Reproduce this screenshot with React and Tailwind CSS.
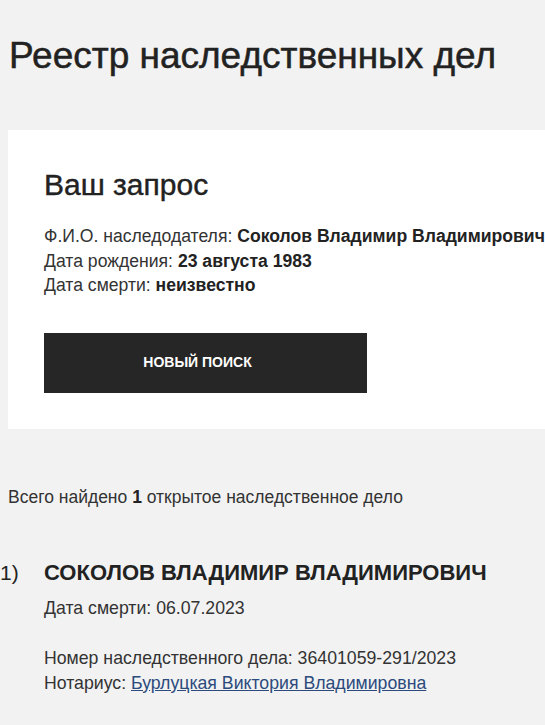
export default function App() {
  return (
    <div className="min-h-screen w-full overflow-hidden bg-[#f2f2f2] text-[#222] font-['Liberation_Sans',Arial,sans-serif]">
      <div className="w-[600px]">
        <h1 className="pl-[9px] pt-[36px] text-[37px] leading-[40px] font-normal text-[#222] [-webkit-text-stroke:0.5px_#222]">
          Реестр наследственных дел
        </h1>

        <div className="ml-[8px] mt-[54px] bg-white pl-[36px] pt-[39px] pb-[36px]">
          <h2 className="text-[30px] leading-[32px] text-[#222] [-webkit-text-stroke:0.4px_#222]">Ваш запрос</h2>
          <div className="mt-[23px] text-[17.6px] leading-[24.5px] text-[#333]">
            <p>
              Ф.И.О. наследодателя: <b className="font-bold text-[#222]">Соколов Владимир Владимирович</b>
            </p>
            <p>
              Дата рождения: <b className="font-bold text-[#222]">23 августа 1983</b>
            </p>
            <p>
              Дата смерти: <b className="font-bold text-[#222]">неизвестно</b>
            </p>
          </div>
          <button className="mt-[35px] flex h-[60px] w-[323px] items-center justify-center bg-[#262626] pr-[16px] text-[14px] font-bold uppercase text-white">
            Новый поиск
          </button>
        </div>

        <p className="mt-[57px] pl-[8px] text-[17.5px] leading-[22px] text-[#333]">
          Всего найдено <b className="font-bold text-[#222]">1</b> открытое наследственное дело
        </p>

        <div className="mt-[52px] flex">
          <span className="w-[44px] text-[21px] leading-[26px] text-[#222]">1)</span>
          <div>
            <h3 className="text-[22px] leading-[26px] font-bold uppercase text-[#222]">
              Соколов Владимир Владимирович
            </h3>
            <p className="mt-[11px] text-[17.7px] leading-[22px] text-[#333]">Дата смерти: 06.07.2023</p>
            <p className="mt-[27px] text-[17.7px] leading-[25px] text-[#333]">
              Номер наследственного дела: 36401059-291/2023
            </p>
            <p className="text-[17.7px] leading-[25px] text-[#333]">
              Нотариус: <a className="text-[#2c4a7c] underline">Бурлуцкая Виктория Владимировна</a>
            </p>
          </div>
        </div>
      </div>
    </div>
  );
}
